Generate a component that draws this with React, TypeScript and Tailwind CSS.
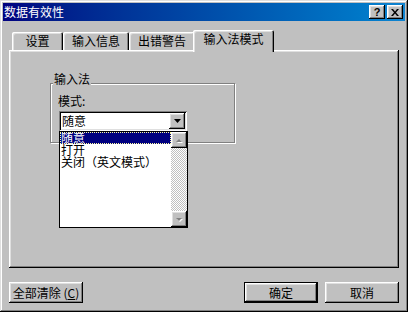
const raised =
  "shadow-[inset_-1px_-1px_#000,inset_1px_1px_#fff,inset_-2px_-2px_#808080,inset_2px_2px_#dfdfdf]";

function Tab({ label, w, selected }: { label: string; w: string; selected?: boolean }) {
  if (selected) {
    return (
      <div
        className={`${w} relative z-10 -ml-[2px] mb-[-2px] h-[22px] bg-[#c0c0c0] rounded-t-[2px] pt-[3px] text-center shadow-[inset_1px_1px_#fff,inset_-1px_0_#000,inset_-2px_0_#808080,inset_2px_2px_#dfdfdf]`}
      >
        {label}
      </div>
    );
  }
  return (
    <div
      className={`${w} h-[18px] bg-[#c0c0c0] rounded-t-[2px] pt-[3px] text-center shadow-[inset_1px_1px_#fff,inset_-1px_0_#000,inset_-2px_0_#808080,inset_2px_2px_#dfdfdf]`}
    >
      {label}
    </div>
  );
}

function DownArrow({ color = "#000" }: { color?: string }) {
  return (
    <svg width="7" height="4" viewBox="0 0 7 4" className="block">
      <polygon points="0,0 7,0 3.5,4" fill={color} />
    </svg>
  );
}

export default function App() {
  return (
    <div className="w-[408px] h-[312px] bg-[#c0c0c0] p-[3px] flex flex-col font-['Noto_Sans_CJK_SC','Noto_Sans_CJK_JP',sans-serif] text-[12px] leading-[12px] text-black shadow-[inset_-1px_-1px_#000,inset_1px_1px_#dfdfdf,inset_-2px_-2px_#808080,inset_2px_2px_#fff]">
      {/* title bar */}
      <div className="h-[18px] flex items-center justify-between bg-gradient-to-r from-[#000080] to-[#1084d0] pl-[1px] pr-[2px]">
        <span className="text-white text-[12px] leading-[18px]">数据有效性</span>
        <div className="flex gap-[2px]">
          <div
            className={`w-[16px] h-[14px] bg-[#c0c0c0] ${raised} flex items-center justify-center font-['Liberation_Sans',sans-serif] text-[11px] leading-[11px] font-bold`}
          >
            ?
          </div>
          <div className={`w-[16px] h-[14px] bg-[#c0c0c0] ${raised} flex items-center justify-center`}>
            <svg width="8" height="7" viewBox="0 0 8 7" className="block">
              <path d="M0 0h2l2 2.5L6 0h2L5 3.5 8 7H6L4 4.5 2 7H0l3-3.5z" fill="#000" />
            </svg>
          </div>
        </div>
      </div>

      <div className="flex-1 flex flex-col px-[6px]">
        {/* tabs */}
        <div className="mt-[9px] h-[20px] flex items-end pl-[3px]">
          <Tab label="设置" w="w-[51px]" />
          <Tab label="输入信息" w="w-[66px]" />
          <Tab label="出错警告" w="w-[66px]" />
          <Tab label="输入法模式" w="w-[81px]" selected />
        </div>

        {/* panel */}
        <div className={`h-[218px] bg-[#c0c0c0] ${raised} pl-[41px] pt-[33px]`}>
          <div className="relative w-[185px] h-[60px] border border-[#808080] shadow-[inset_1px_1px_#fff,1px_1px_#fff] pl-[7px] pt-[11px]">
            <span className="absolute left-[2px] top-[-11px] px-[1px] bg-[#c0c0c0]">输入法</span>
            <div>模式:</div>
            <div className="relative ml-[1px] mt-[4px] w-[128px] h-[20px] bg-white p-[2px] flex shadow-[inset_1px_1px_#808080,inset_-1px_-1px_#fff,inset_2px_2px_#000,inset_-2px_-2px_#dfdfdf]">
              <div className="flex-1 pl-[1px] flex items-center">随意</div>
              <div className={`w-[16px] h-[16px] bg-[#c0c0c0] ${raised} flex items-center justify-center`}>
                <DownArrow />
              </div>

              {/* dropdown list */}
              <div className="absolute z-20 left-0 top-full w-[129px] h-[97px] border border-black bg-white flex">
                <div className="flex-1 flex flex-col">
                  <div className="h-[12px] bg-[#000080] text-white outline outline-1 outline-dotted outline-[#ffffa0] -outline-offset-1 pl-[1px]">
                    随意
                  </div>
                  <div className="h-[12px] pl-[1px]">打开</div>
                  <div className="h-[12px] pl-[1px]">关闭（英文模式）</div>
                </div>
                <div className="w-[16px] flex flex-col">
                  <div className={`h-[16px] bg-[#c0c0c0] ${raised} flex items-center justify-center`}>
                    <svg width="8" height="5" viewBox="0 0 8 5" className="block">
                      <polygon points="1,4 7,4 4,1" fill="#fff" transform="translate(1,1)" />
                      <polygon points="1,4 7,4 4,1" fill="#808080" />
                    </svg>
                  </div>
                  <div className="flex-1 bg-[repeating-conic-gradient(#c0c0c0_0%_25%,#ffffff_0%_50%)] bg-[length:2px_2px]" />
                  <div className={`h-[16px] bg-[#c0c0c0] ${raised} flex items-center justify-center`}>
                    <svg width="8" height="5" viewBox="0 0 8 5" className="block">
                      <polygon points="1,1 7,1 4,4" fill="#fff" transform="translate(1,1)" />
                      <polygon points="1,1 7,1 4,4" fill="#808080" />
                    </svg>
                  </div>
                </div>
              </div>
            </div>
          </div>
        </div>

        {/* bottom buttons */}
        <div className="mt-[14px] flex justify-between">
          <div className={`w-[74px] h-[21px] bg-[#c0c0c0] ${raised} flex items-center justify-center`}>
            全部清除 (<span className="underline">C</span>)
          </div>
          <div className="flex gap-[7px]">
            <div className="w-[74px] h-[21px] border border-black">
              <div className={`w-full h-full bg-[#c0c0c0] ${raised} flex items-center justify-center`}>确定</div>
            </div>
            <div className={`w-[74px] h-[21px] bg-[#c0c0c0] ${raised} flex items-center justify-center`}>取消</div>
          </div>
        </div>
      </div>
    </div>
  );
}
